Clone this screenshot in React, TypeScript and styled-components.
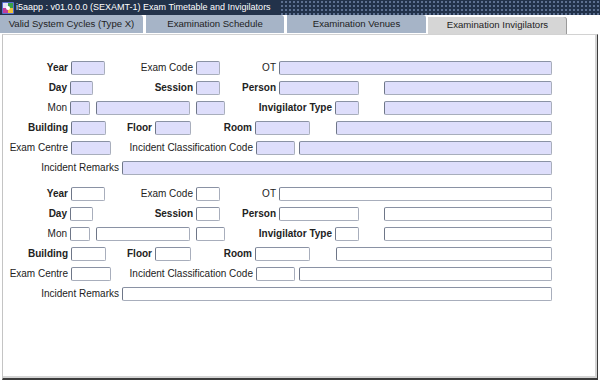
import styled, { createGlobalStyle } from 'styled-components';

const GlobalStyle = createGlobalStyle`
  html, body {
    margin: 0;
    padding: 0;
    background: #ffffff;
    font-family: "Liberation Sans", Arial, sans-serif;
  }
`;

const Window = styled.div`
  width: 600px;
  height: 385px;
  display: flex;
  flex-direction: column;
  background: #ffffff;
  overflow: hidden;
`;

const TitleBar = styled.div`
  height: 15px;
  display: flex;
  align-items: center;
  background-color: #22324a;
  background-image: radial-gradient(circle, #5d7192 0.7px, transparent 1.1px);
  background-size: 4px 4px;
`;

const AppIcon = styled.svg`
  width: 14px;
  height: 14px;
  flex: none;
  margin-left: 1px;
  background: #22324a;
`;

const TitleText = styled.span`
  height: 15px;
  line-height: 15px;
  font-size: 9px;
  color: #ffffff;
  background: #22324a;
  padding: 0 8px 0 1px;
  white-space: nowrap;
`;

const TabRow = styled.div`
  height: 19px;
  display: flex;
  align-items: flex-start;
`;

const Tab = styled.div<{ $w: number; $active?: boolean; $gap?: number }>`
  width: ${({ $w }) => $w}px;
  height: ${({ $active }) => ($active ? 17 : 18)}px;
  margin-top: ${({ $active }) => ($active ? 2 : 0)}px;
  margin-right: ${({ $gap }) => $gap ?? 0}px;
  background: ${({ $active }) => ($active ? '#d6d6d6' : '#a6b4c7')};
  border-radius: 0 3px 0 0;
  box-shadow: ${({ $active }) => ($active ? 'inset -1px 0 0 #9a9a9a' : 'none')};
  color: #1e1e1e;
  font-size: 9.6px;
  line-height: ${({ $active }) => ($active ? 16 : 18)}px;
  text-align: center;
  white-space: nowrap;
`;

const Panel = styled.div`
  flex: 1;
  margin: 0 2px 5px 2px;
  border-top: 1px solid #d2d2d2;
  border-left: 1px solid #c4c4c4;
  border-right: 1px solid #3c3c3c;
  border-bottom: 2px solid #3c3c3c;
  box-shadow: inset -2px -2px 0 #d4d4d4;
  padding-top: 26px;
  display: flex;
  flex-direction: column;
  gap: 12px;
`;

const Section = styled.div`
  display: flex;
  flex-direction: column;
  gap: 6px;
`;

const Row = styled.div`
  height: 14px;
  display: flex;
  align-items: center;
`;

const Label = styled.span<{ $w: number; $bold?: boolean }>`
  width: ${({ $w }) => $w}px;
  flex: none;
  box-sizing: border-box;
  padding-right: 3px;
  text-align: right;
  font-size: 10px;
  line-height: 14px;
  font-weight: ${({ $bold }) => ($bold ? 700 : 400)};
  color: #222222;
  white-space: nowrap;
`;

const Field = styled.div<{ $w: number; $gap?: number; $filled?: boolean }>`
  width: ${({ $w }) => $w}px;
  height: 14px;
  flex: none;
  box-sizing: border-box;
  margin-left: ${({ $gap }) => $gap ?? 0}px;
  background: ${({ $filled }) => ($filled ? '#dedefb' : '#ffffff')};
  border: 1px solid #a8aebc;
  border-left-color: #6e7688;
  border-top-color: #8a92a4;
  border-radius: 2px;
`;

function FormBlock({ filled }: { filled: boolean }) {
  return (
    <Section>
      <Row>
        <Label $w={68} $bold>Year</Label>
        <Field $w={34} $filled={filled} />
        <Label $w={91}>Exam Code</Label>
        <Field $w={24} $filled={filled} />
        <Label $w={59}>OT</Label>
        <Field $w={273} $filled={filled} />
      </Row>
      <Row>
        <Label $w={67} $bold>Day</Label>
        <Field $w={23} $filled={filled} />
        <Label $w={103} $bold>Session</Label>
        <Field $w={24} $filled={filled} />
        <Label $w={59} $bold>Person</Label>
        <Field $w={80} $filled={filled} />
        <Field $w={168} $gap={25} $filled={filled} />
      </Row>
      <Row>
        <Label $w={67}>Mon</Label>
        <Field $w={20} $filled={filled} />
        <Field $w={94} $gap={6} $filled={filled} />
        <Field $w={29} $gap={6} $filled={filled} />
        <Label $w={110} $bold>Invigilator Type</Label>
        <Field $w={24} $filled={filled} />
        <Field $w={168} $gap={25} $filled={filled} />
      </Row>
      <Row>
        <Label $w={68} $bold>Building</Label>
        <Field $w={35} $filled={filled} />
        <Label $w={49} $bold>Floor</Label>
        <Field $w={36} $filled={filled} />
        <Label $w={64} $bold>Room</Label>
        <Field $w={55} $filled={filled} />
        <Field $w={216} $gap={26} $filled={filled} />
      </Row>
      <Row>
        <Label $w={68}>Exam Centre</Label>
        <Field $w={40} $filled={filled} />
        <Label $w={145}>Incident Classification Code</Label>
        <Field $w={39} $filled={filled} />
        <Field $w={253} $gap={4} $filled={filled} />
      </Row>
      <Row>
        <Label $w={119}>Incident Remarks</Label>
        <Field $w={430} $filled={filled} />
      </Row>
    </Section>
  );
}

export default function App() {
  return (
    <>
      <GlobalStyle />
      <Window>
        <TitleBar>
          <AppIcon viewBox="0 0 14 14">
            <rect x="1" y="1" width="12" height="12" rx="1" fill="#5b6fd0" />
            <rect x="2" y="2" width="5" height="5" fill="#e4e4f4" />
            <rect x="7" y="2" width="5" height="5" fill="#3aa14a" />
            <rect x="2" y="7" width="5" height="5" fill="#c23d9a" />
            <rect x="7" y="7" width="5" height="5" fill="#f0c23a" />
            <circle cx="7" cy="7" r="2" fill="#ffffff" />
          </AppIcon>
          <TitleText>i5aapp : v01.0.0.0 (SEXAMT-1) Exam Timetable and Invigilators</TitleText>
        </TitleBar>
        <TabRow>
          <Tab $w={143} $gap={3}>Valid System Cycles (Type X)</Tab>
          <Tab $w={138} $gap={3}>Examination Schedule</Tab>
          <Tab $w={139} $gap={2}>Examination Venues</Tab>
          <Tab $w={139} $active>Examination Invigilators</Tab>
        </TabRow>
        <Panel>
          <FormBlock filled />
          <FormBlock filled={false} />
        </Panel>
      </Window>
    </>
  );
}
